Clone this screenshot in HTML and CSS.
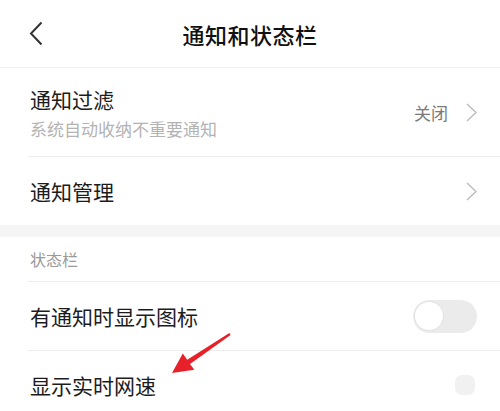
FILE: index.html
```html
<!DOCTYPE html>
<html lang="zh-CN">
<head>
  <meta charset="UTF-8">
  <title>通知和状态栏</title>
  <link rel="stylesheet" href="styles.css">
</head>
<body>
  <div class="page">
    <div class="header">
      <div class="back">
        <svg width="14" height="25" viewBox="0 0 14 25"><path d="M12.5 1.5 L2 12.5 L12.5 23.5" fill="none" stroke="#333" stroke-width="2"/></svg>
      </div>
      <h1 class="title">通知和状态栏</h1>
      <div></div>
    </div>

    <div class="row row-tall">
      <div class="texts">
        <div class="label">通知过滤</div>
        <div class="sub">系统自动收纳不重要通知</div>
      </div>
      <div class="right">
        <span class="value">关闭</span>
        <svg class="chev" width="11" height="19" viewBox="0 0 11 19"><path d="M1 1 L10 9.5 L1 18" fill="none" stroke="#bdbdbd" stroke-width="1.5"/></svg>
      </div>
    </div>

    <div class="row no-line">
      <div class="label">通知管理</div>
      <div class="right">
        <svg class="chev" width="11" height="19" viewBox="0 0 11 19"><path d="M1 1 L10 9.5 L1 18" fill="none" stroke="#bdbdbd" stroke-width="1.5"/></svg>
      </div>
    </div>

    <div class="band"></div>

    <div class="section">状态栏</div>

    <div class="row">
      <div class="label">有通知时显示图标</div>
      <div class="toggle"><span class="knob"></span></div>
    </div>

    <div class="row no-line">
      <div class="label">显示实时网速</div>
      <div class="blob"></div>
    </div>

    <!-- annotation arrow drawn over the list -->
    <svg class="arrow" width="80" height="55" viewBox="160 325 80 55">
      <polygon points="229.4,333 187.2,359.7 182.8,353.6 172,373 194.3,369.8 190,363.9 230.6,335" fill="#e8202a"/>
    </svg>
  </div>
</body>
</html>
```

FILE: styles.css
```css
body {
  margin: 0;
  background-color: #fff;
  font-family: "Noto Sans CJK SC", "Noto Sans", sans-serif;
  color: #1c1c1c;
}
.page {
  position: relative;
  width: 500px;
  height: 411px;
  overflow: hidden;
}
.header {
  height: 67px;
  display: grid;
  grid-template-columns: 1fr auto 1fr;
  align-items: center;
  border-bottom: 1px solid #f0f0f0;
}
.back {
  padding-left: 29px;
  display: flex;
  align-items: center;
}
.title {
  margin: 0;
  font-size: 22px;
  font-weight: 500;
  letter-spacing: 0.5px;
  color: #111;
}
.row {
  margin-left: 28px;
  padding: 0 23px 0 2px;
  height: 68px;
  display: flex;
  align-items: center;
  justify-content: space-between;
  border-bottom: 1px solid #ededed;
}
.row-tall {
  height: 88px;
}
.no-line {
  border-bottom: none;
}
.label {
  font-size: 21px;
  color: #1c1c1c;
}
.sub {
  margin-top: 2px;
  font-size: 17px;
  color: #b3b3b3;
}
.right {
  display: flex;
  align-items: center;
}
.value {
  font-size: 17px;
  color: #7a7a7a;
  margin-right: 18px;
}
.band {
  height: 12px;
  background-color: #f5f5f5;
}
.section {
  margin-left: 28px;
  padding-left: 2px;
  height: 44px;
  display: flex;
  align-items: center;
  font-size: 16px;
  color: #9a9a9a;
  border-bottom: 1px solid #ededed;
}
.toggle {
  width: 64px;
  height: 33px;
  border-radius: 17px;
  background-color: #ebebeb;
  display: flex;
  align-items: center;
  padding-left: 2px;
  box-sizing: border-box;
}
.knob {
  width: 28px;
  height: 28px;
  border-radius: 50%;
  background-color: #fff;
  box-shadow: 0 0 0 1px #e2e2e2;
}
.blob {
  width: 20px;
  height: 20px;
  margin-right: 2px;
  border-radius: 7px;
  background-color: #f1f1f1;
}
.arrow {
  position: absolute;
  left: 160px;
  top: 325px;
}
```
